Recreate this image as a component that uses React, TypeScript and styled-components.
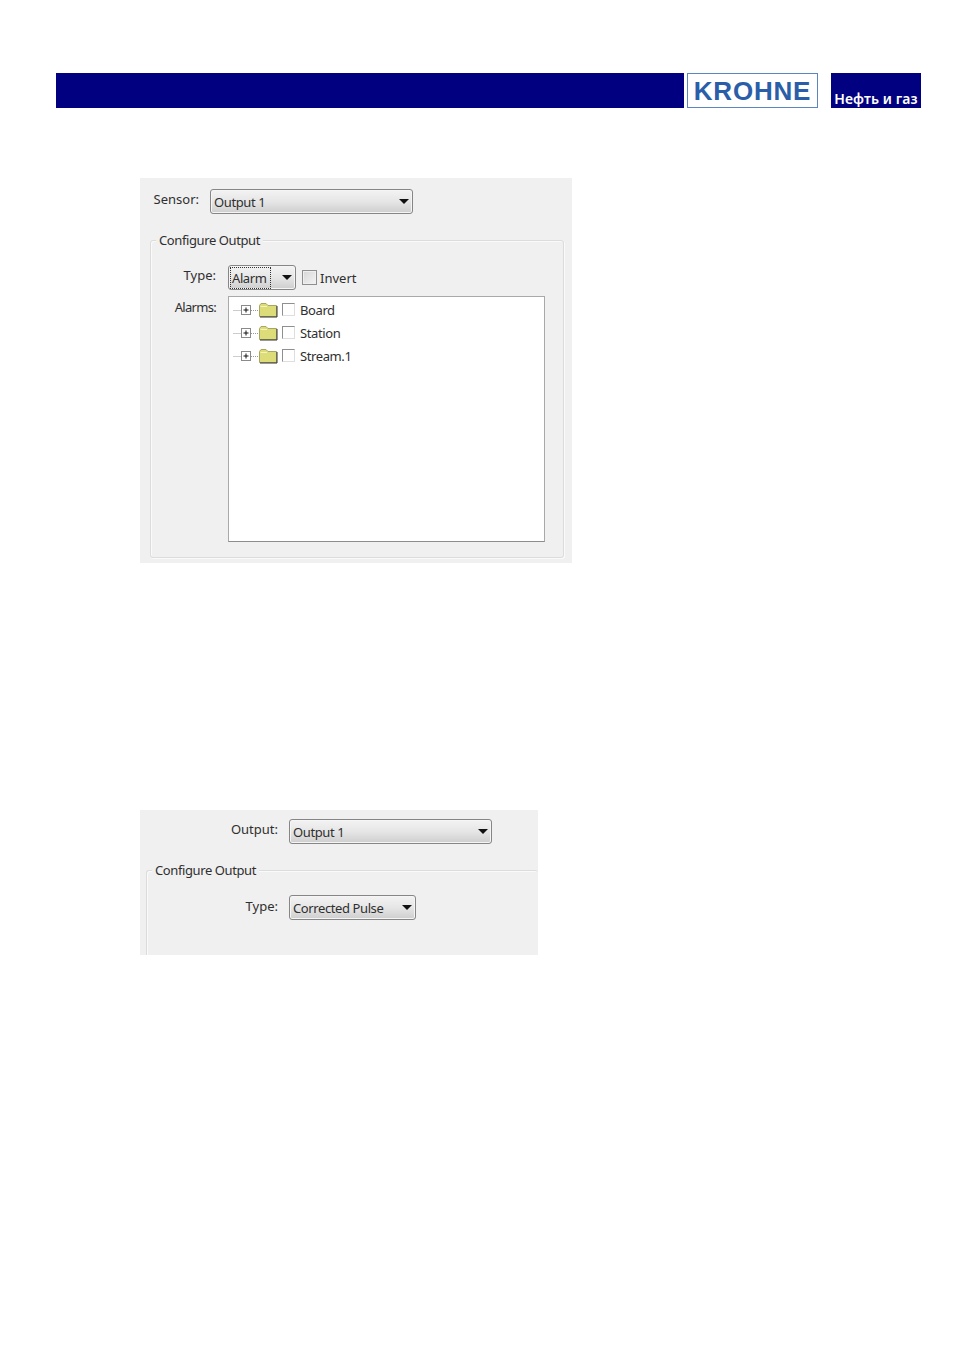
import React from "react";
import styled, { createGlobalStyle } from "styled-components";

const GlobalStyle = createGlobalStyle`
  html, body {
    margin: 0;
    background: #fff;
  }
`;

const Page = styled.div`
  width: 954px;
  height: 1350px;
  padding: 73px 0 0 56px;
  box-sizing: border-box;
  font-family: "Noto Sans", sans-serif;
  font-size: 13px;
  letter-spacing: -0.4px;
  color: #2f2f2f;
`;

const Header = styled.header`
  display: flex;
  width: 865px;
  height: 35px;
`;

const Band = styled.div`
  width: 628px;
  background: #000080;
`;

const Logo = styled.div`
  width: 131px;
  margin-left: 3px;
  padding-top: 1px;
  box-sizing: border-box;
  border: 1px solid #5c86c0;
  display: flex;
  align-items: center;
  justify-content: center;
  font-family: "Liberation Sans", sans-serif;
  font-weight: 700;
  font-size: 26px;
  letter-spacing: 0.8px;
  color: #2a5ea8;
`;

const Division = styled.div`
  width: 90px;
  margin-left: 13px;
  padding-bottom: 1px;
  box-sizing: border-box;
  background: #000080;
  color: #fff;
  font-weight: 600;
  font-size: 14px;
  letter-spacing: 0.1px;
  line-height: 17px;
  display: flex;
  align-items: flex-end;
  justify-content: center;
`;

const Panel = styled.section<{ $width: number; $height: number; $top: number }>`
  width: ${(p) => p.$width}px;
  height: ${(p) => p.$height}px;
  margin: ${(p) => p.$top}px 0 0 84px;
  padding-top: 1px;
  box-sizing: border-box;
  background: #f0f0f0;
  overflow: hidden;
`;

const Row = styled.div<{ $top: number; $gap?: number }>`
  display: flex;
  align-items: flex-start;
  margin-top: ${(p) => p.$top}px;
  gap: ${(p) => p.$gap ?? 12}px;
`;

const Label = styled.label<{ $width: number; $drop: number; $tight?: boolean }>`
  width: ${(p) => p.$width}px;
  padding-top: ${(p) => p.$drop}px;
  flex: none;
  text-align: right;
  line-height: 18px;
  letter-spacing: ${(p) => (p.$tight ? "-0.7px" : "0")};
  white-space: nowrap;
`;

const Select = styled.div<{ $width: number }>`
  width: ${(p) => p.$width}px;
  height: 25px;
  flex: none;
  box-sizing: border-box;
  border: 1px solid #868686;
  border-radius: 3px;
  padding: 0 3px 0 3px;
  background: linear-gradient(#f3f3f3 0%, #e6e6e6 50%, #cecece 100%);
  box-shadow: inset 0 0 0 1px #f5f5f5;
  display: flex;
  align-items: center;
  justify-content: space-between;
  line-height: 18px;
  white-space: nowrap;
`;

const SelectValue = styled.span<{ $focused?: boolean }>`
  padding-top: 1px;
  ${(p) => p.$focused && "outline: 1px dotted #333; outline-offset: 1px; padding: 0; margin-top: 1px; width: 37px;"}
`;

const Arrow = styled.span`
  width: 0;
  height: 0;
  margin-right: 0;
  border-left: 5px solid transparent;
  border-right: 5px solid transparent;
  border-top: 5px solid #111;
`;

const Group = styled.fieldset<{ $width: number; $height: number; $left: number; $open?: boolean }>`
  width: ${(p) => p.$width}px;
  height: ${(p) => p.$height}px;
  margin: 0 0 0 ${(p) => p.$left}px;
  padding: 0;
  min-width: 0;
  box-sizing: border-box;
  border: 1px solid #dcdcdc;
  border-radius: 3px;
  box-shadow: inset 1px 1px 0 #fafafa, 1px 1px 0 #fafafa;
  ${(p) => p.$open && "border-right: 0; border-bottom: 0;"}
`;

const GroupTitle = styled.legend`
  margin-left: 5px;
  padding: 0 3px;
  line-height: 16px;
  background: #f0f0f0;
`;

const InvertBox = styled.span`
  width: 15px;
  height: 15px;
  flex: none;
  box-sizing: border-box;
  border: 1px solid #8e8f8f;
  background: linear-gradient(135deg, #d6d6d6, #f4f4f4);
  box-shadow: inset 0 0 0 1px #efefef;
`;

const InvertOption = styled.div`
  display: flex;
  align-items: center;
  gap: 3px;
  height: 25px;
  margin-left: -6px;
  letter-spacing: 0;
`;

const Tree = styled.div`
  width: 317px;
  height: 246px;
  flex: none;
  box-sizing: border-box;
  border: 1px solid #a9a9a9;
  border-bottom-color: #8d8d8d;
  background: #fff;
  padding: 1px 0 0 4px;
  display: flex;
  flex-direction: column;
`;

const TreeRow = styled.div`
  display: flex;
  align-items: center;
  height: 23px;
`;

const TreeCheck = styled.span`
  width: 13px;
  height: 13px;
  flex: none;
  box-sizing: border-box;
  border: 1px solid;
  border-color: #8e8f8f #dedede #dedede #8e8f8f;
  background: #fff;
`;

const TreeLabel = styled.span`
  margin-left: 5px;
  line-height: 18px;
`;

const FolderIcon = () => (
  <svg width="49" height="16" viewBox="0 0 49 16" style={{ flex: "none" }}>
    <path d="M0.5 8.5H8M18 8.5H25.5" stroke="#999" strokeDasharray="1 1" fill="none" />
    <rect x="8.5" y="3.5" width="9" height="9" fill="#fff" stroke="#8a8a8a" />
    <path d="M10.5 8H15.5M13 5.5V10.5" stroke="#111" fill="none" />
    <path d="M26.5 14.5V3.5L28 1.5H33L35 3.5H43.5V14.5Z" fill="#dcdc78" stroke="#a9a562" />
    <path d="M44 4V15H27" stroke="#333" fill="none" />
    <path d="M27.5 4.5H34" stroke="#f5f3b8" fill="none" />
  </svg>
);

const alarms = ["Board", "Station", "Stream.1"];

export default function App() {
  return (
    <Page>
      <GlobalStyle />
      <Header>
        <Band />
        <Logo>KROHNE</Logo>
        <Division>Нефть и газ</Division>
      </Header>

      <Panel $width={432} $height={385} $top={70}>
        <Row $top={10} $gap={11}>
          <Label $width={59} $drop={1}>Sensor:</Label>
          <Select $width={203}>
            <SelectValue>Output 1</SelectValue>
            <Arrow />
          </Select>
        </Row>
        <Row $top={18}>
          <Group $width={414} $height={326} $left={10}>
            <GroupTitle>Configure Output</GroupTitle>
            <Row $top={17}>
              <Label $width={65} $drop={1}>Type:</Label>
              <Select $width={68}>
                <SelectValue $focused>Alarm</SelectValue>
                <Arrow />
              </Select>
              <InvertOption>
                <InvertBox />
                Invert
              </InvertOption>
            </Row>
            <Row $top={6}>
              <Label $width={65} $drop={2} $tight>Alarms:</Label>
              <Tree>
                {alarms.map((name) => (
                  <TreeRow key={name}>
                    <FolderIcon />
                    <TreeCheck />
                    <TreeLabel>{name}</TreeLabel>
                  </TreeRow>
                ))}
              </Tree>
            </Row>
          </Group>
        </Row>
      </Panel>

      <Panel $width={398} $height={145} $top={247}>
        <Row $top={8} $gap={11}>
          <Label $width={138} $drop={1}>Output:</Label>
          <Select $width={203}>
            <SelectValue>Output 1</SelectValue>
            <Arrow />
          </Select>
        </Row>
        <Row $top={18}>
          <Group $width={392} $height={100} $left={6} $open>
            <GroupTitle>Configure Output</GroupTitle>
            <Row $top={17} $gap={11}>
              <Label $width={131} $drop={2}>Type:</Label>
              <Select $width={127}>
                <SelectValue>Corrected Pulse</SelectValue>
                <Arrow />
              </Select>
            </Row>
          </Group>
        </Row>
      </Panel>
    </Page>
  );
}
